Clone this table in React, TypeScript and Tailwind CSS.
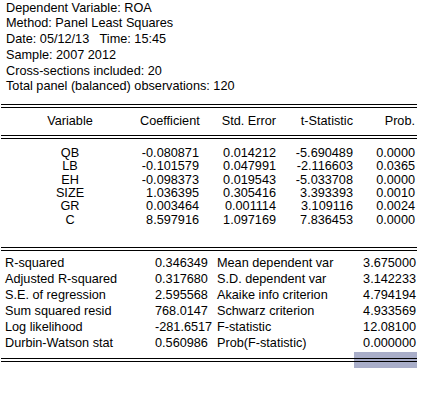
import React from "react";

const coefRows = [
  ["QB", "-0.080871", "0.014212", "-5.690489", "0.0000"],
  ["LB", "-0.101579", "0.047991", "-2.116603", "0.0365"],
  ["EH", "-0.098373", "0.019543", "-5.033708", "0.0000"],
  ["SIZE", "1.036395", "0.305416", "3.393393", "0.0010"],
  ["GR", "0.003464", "0.001114", "3.109116", "0.0024"],
  ["C", "8.597916", "1.097169", "7.836453", "0.0000"],
];

const statRows = [
  ["R-squared", "0.346349", "Mean dependent var", "3.675000"],
  ["Adjusted R-squared", "0.317680", "S.D. dependent var", "3.142233"],
  ["S.E. of regression", "2.595568", "Akaike info criterion", "4.794194"],
  ["Sum squared resid", "768.0147", "Schwarz criterion", "4.933569"],
  ["Log likelihood", "-281.6517", "F-statistic", "12.08100"],
  ["Durbin-Watson stat", "0.560986", "Prob(F-statistic)", "0.000000"],
];

function DoubleLine({ className = "" }: { className?: string }) {
  return (
    <div
      className={`relative z-10 ml-[1px] w-[416px] h-[4px] border-t border-b border-black ${className}`}
    />
  );
}

export default function App() {
  return (
    <div className="relative w-[438px] h-[395px] bg-white text-black text-[12.7px] font-['Liberation_Sans',Arial,sans-serif]">
      <div className="absolute left-[354px] top-[352px] w-[63px] h-[16px] bg-[#a9aec9]" />
      <div className="pl-[6px] leading-[15.8px] pt-[0.5px]">
        <div>Dependent Variable: ROA</div>
        <div>Method: Panel Least Squares</div>
        <div>
          Date: 05/12/13&nbsp;&nbsp; Time: 15:45
        </div>
        <div>Sample: 2007 2012</div>
        <div>Cross-sections included: 20</div>
        <div>Total panel (balanced) observations: 120</div>
      </div>
      <DoubleLine className="mt-[8.5px]" />
      <div className="grid grid-cols-[140px_59px_77px_77px_62px] h-[27px] items-center leading-[16px]">
        <div className="text-center">Variable</div>
        <div className="text-right">Coefficient</div>
        <div className="text-right">Std. Error</div>
        <div className="text-right">t-Statistic</div>
        <div className="text-right">Prob.</div>
      </div>
      <DoubleLine />
      <div className="pt-[8px] leading-[13.4px]">
        {coefRows.map((r) => (
          <div
            key={r[0]}
            className="grid grid-cols-[140px_59px_77px_77px_62px]"
          >
            <div className="text-center">{r[0]}</div>
            <div className="text-right">{r[1]}</div>
            <div className="text-right">{r[2]}</div>
            <div className="text-right">{r[3]}</div>
            <div className="text-right">{r[4]}</div>
          </div>
        ))}
      </div>
      <DoubleLine className="mt-[19.4px]" />
      <div className="pt-[4px] leading-[16px]">
        {statRows.map((r) => (
          <div
            key={r[0]}
            className="grid grid-cols-[5px_150px_44px_18px_199px]"
          >
            <div />
            <div>{r[0]}</div>
            <div className="text-right whitespace-nowrap">{r[1]}</div>
            <div />
            <div className="flex justify-between">
              <span>{r[2]}</span>
              <span>{r[3]}</span>
            </div>
          </div>
        ))}
      </div>
      <DoubleLine className="mt-[7px]" />
    </div>
  );
}
